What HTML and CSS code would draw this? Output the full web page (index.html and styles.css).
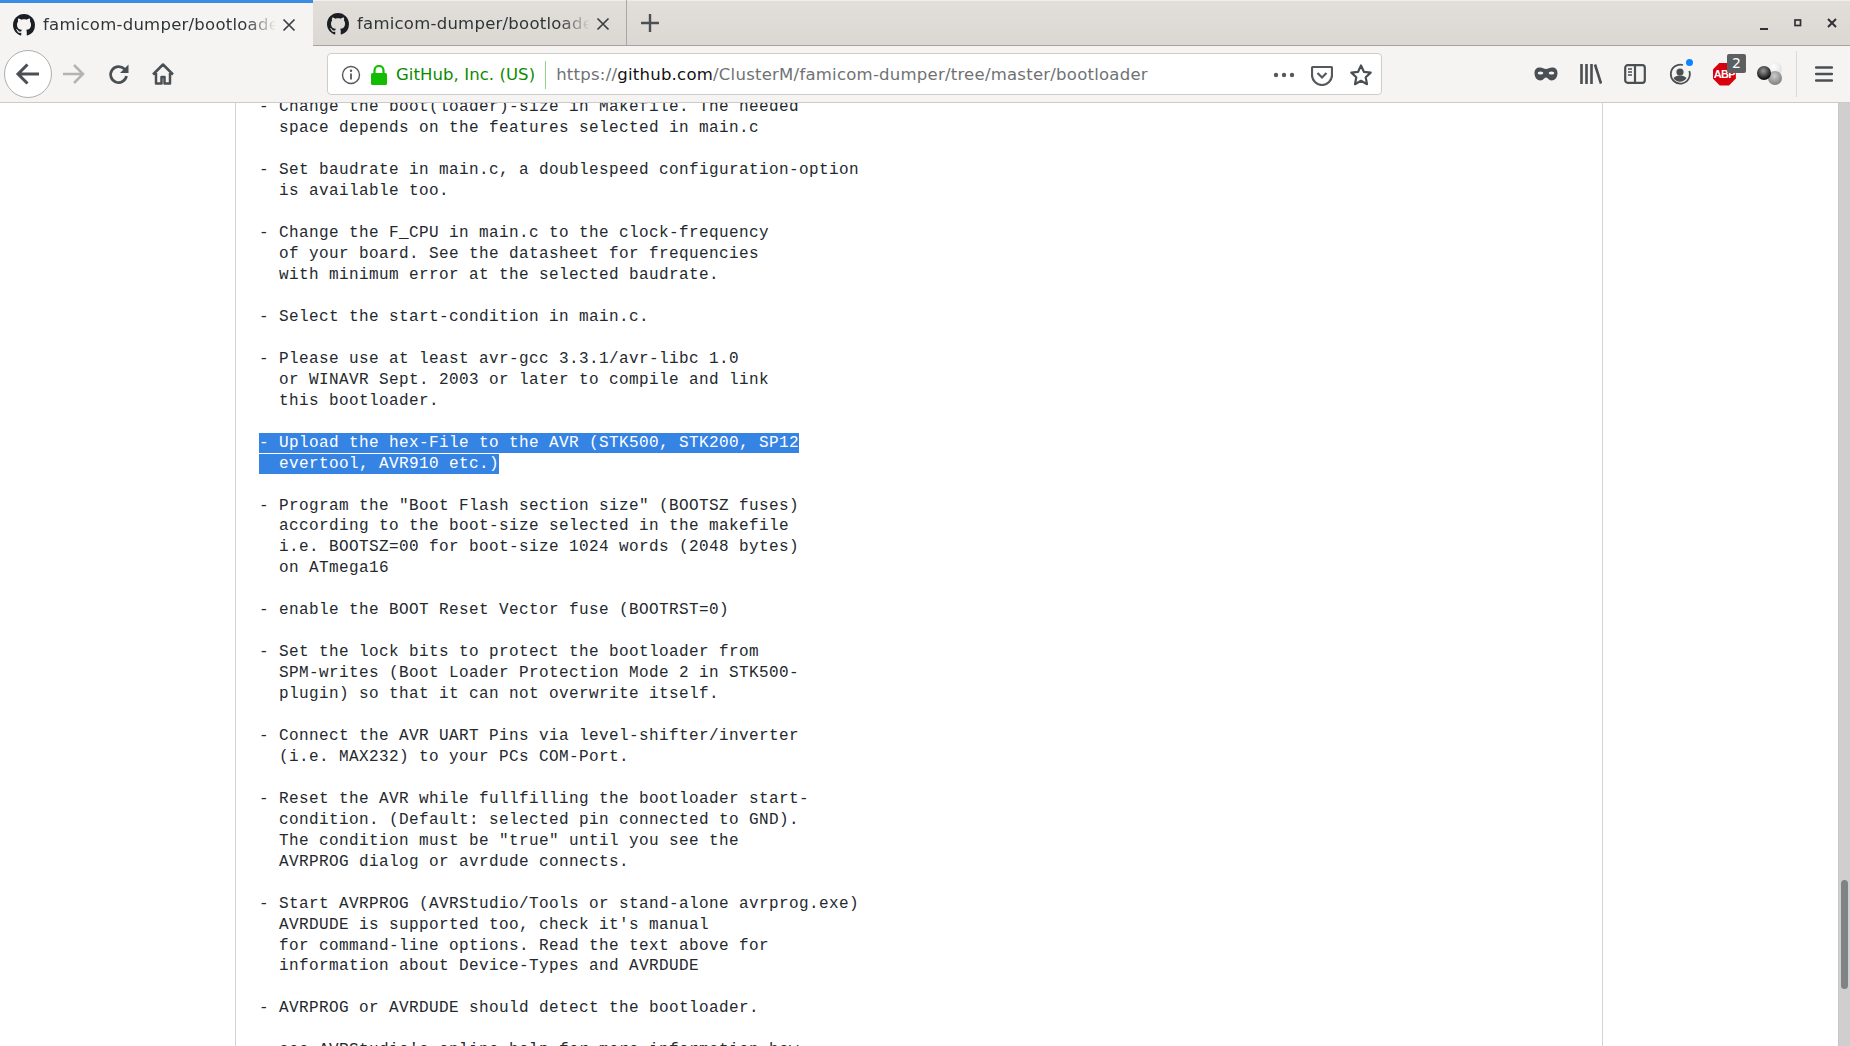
FILE: index.html
```html
<!DOCTYPE html>
<html lang="en">
<head>
<meta charset="utf-8">
<title>famicom-dumper/bootloader</title>
<link rel="stylesheet" href="styles.css">
</head>
<body>
<svg class="defs" width="0" height="0" aria-hidden="true">
  <symbol id="gh" viewBox="0 0 16 16"><path d="M8 0C3.58 0 0 3.58 0 8c0 3.54 2.29 6.53 5.47 7.59.4.07.55-.17.55-.38 0-.19-.01-.82-.01-1.49-2.01.37-2.53-.49-2.69-.94-.09-.23-.48-.94-.82-1.13-.28-.15-.68-.52-.01-.53.63-.01 1.08.58 1.23.82.72 1.21 1.87.87 2.33.66.07-.52.28-.87.51-1.07-1.78-.2-3.64-.89-3.64-3.95 0-.87.31-1.59.82-2.15-.08-.2-.36-1.02.08-2.12 0 0 .67-.21 2.2.82.64-.18 1.32-.27 2-.27.68 0 1.36.09 2 .27 1.53-1.04 2.2-.82 2.2-.82.44 1.1.16 1.92.08 2.12.51.56.82 1.27.82 2.15 0 3.07-1.87 3.75-3.65 3.95.29.25.54.73.54 1.48 0 1.07-.01 1.93-.01 2.2 0 .21.15.46.55.38A8.013 8.013 0 0016 8c0-4.42-3.58-8-8-8z"/></symbol>
  <symbol id="x" viewBox="0 0 16 16"><path d="M2.5 2.5l11 11M13.5 2.5l-11 11" fill="none" stroke="currentColor" stroke-width="1.7"/></symbol>
</svg>
<header class="chrome">
  <div class="tabbar">
    <div class="tab tab-active">
      <svg class="tab-icon"><use href="#gh"/></svg>
      <span class="tab-title">famicom-dumper/bootloader</span>
      <svg class="tab-close"><use href="#x"/></svg>
    </div>
    <div class="tab">
      <svg class="tab-icon"><use href="#gh"/></svg>
      <span class="tab-title">famicom-dumper/bootloader</span>
      <svg class="tab-close"><use href="#x"/></svg>
    </div>
    <div class="newtab">
      <svg width="20" height="20" viewBox="0 0 20 20"><path d="M10 1v18M1 10h18" stroke="#4a4f53" stroke-width="2.4" fill="none"/></svg>
    </div>
    <div class="winctl">
      <svg width="14" height="14" viewBox="0 0 14 14" class="win-min"><rect x="3" y="10" width="8" height="2" fill="#2f3235"/></svg>
      <svg width="14" height="14" viewBox="0 0 14 14"><rect x="4" y="4" width="5.5" height="5.5" fill="none" stroke="#2f3235" stroke-width="1.7"/></svg>
      <svg width="14" height="14" viewBox="0 0 14 14"><path d="M3 3l8 8M11 3l-8 8" stroke="#2f3235" stroke-width="2" fill="none"/></svg>
    </div>
  </div>
  <div class="toolbar">
    <div class="backbtn">
      <svg width="26" height="24" viewBox="0 0 26 24"><path d="M24 12H3M12.5 2.5L3 12l9.500 9.500" fill="none" stroke="#4a4f53" stroke-width="3"/></svg>
    </div>
    <div class="navbtn fwd">
      <svg width="24" height="22" viewBox="0 0 24 22"><path d="M1 11h20M12 2l9 9-9 9" fill="none" stroke="#b3b3b3" stroke-width="2.500"/></svg>
    </div>
    <div class="navbtn">
      <svg width="22" height="22" viewBox="0 0 22 22"><path d="M18.500 13a8 8 0 1 1-2.300-7.200L19 8" fill="none" stroke="#4a4f53" stroke-width="2.700"/><path d="M20.500 1.500V10H12z" fill="#4a4f53"/></svg>
    </div>
    <div class="navbtn">
      <svg width="24" height="24" viewBox="0 0 24 24"><path d="M2 12.500L12 2.500l10 10M5 11v10.500h5.500V15h3v6.500H19V11" fill="none" stroke="#4a4f53" stroke-width="2.500" stroke-linejoin="round"/></svg>
    </div>
    <div class="urlbar">
      <svg class="url-info" width="20" height="20" viewBox="0 0 20 20"><circle cx="10" cy="10" r="8.500" fill="none" stroke="#55595c" stroke-width="1.400"/><path d="M10 8.500v6" stroke="#55595c" stroke-width="1.800"/><circle cx="10" cy="5.800" r="1.200" fill="#55595c"/></svg>
      <svg class="url-lock" width="18" height="20" viewBox="0 0 18 20"><rect x="1" y="8" width="16" height="12" rx="1.500" fill="#12bc00"/><path d="M4.500 8V5.500a4.500 4.500 0 0 1 9 0V8" fill="none" stroke="#12bc00" stroke-width="2.200"/></svg>
      <span class="url-org">GitHub, Inc. (US)</span>
      <span class="url-sep"></span>
      <span class="url-text">https://<b>github.com</b>/ClusterM/famicom-dumper/tree/master/bootloader</span>
      <span class="url-actions">
        <svg width="22" height="6" viewBox="0 0 22 6"><circle cx="3" cy="3" r="2.200" fill="#55595c"/><circle cx="11" cy="3" r="2.200" fill="#55595c"/><circle cx="19" cy="3" r="2.200" fill="#55595c"/></svg>
        <svg width="22" height="22" viewBox="0 0 22 22"><path d="M2 3h18a1 1 0 0 1 1 1v7a10 10 0 0 1-20 0V4a1 1 0 0 1 1-1z" fill="none" stroke="#55595c" stroke-width="2.200"/><path d="M6.500 9l4.500 4.500L15.500 9" fill="none" stroke="#55595c" stroke-width="2.200"/></svg>
        <svg width="24" height="24" viewBox="0 0 24 24"><path d="M12 2.500l2.900 6.300 6.800.8-5 4.700 1.300 6.900-6-3.400-6 3.400 1.300-6.900-5-4.700 6.800-.8z" fill="none" stroke="#4a4f53" stroke-width="2.200" stroke-linejoin="round"/></svg>
      </span>
    </div>
    <div class="tools">
      <span class="tool"><svg width="24" height="14" viewBox="0 0 24 14"><path d="M6 .5c2.500 0 4 1.500 6 1.500s3.500-1.500 6-1.500c3.500 0 5.500 2 5.500 5.500 0 4.500-2.500 7.500-6 7.500-3 0-3.500-3-5.500-3s-2.500 3-5.500 3c-3.500 0-6-3-6-7.500C.5 2.500 2.500.5 6 .5z" fill="#4a4f53"/><ellipse cx="6.500" cy="6" rx="2.800" ry="1.600" fill="#f5f4f3"/><ellipse cx="17.500" cy="6" rx="2.800" ry="1.600" fill="#f5f4f3"/></svg></span>
      <span class="tool"><svg width="22" height="20" viewBox="0 0 22 20"><path d="M1.500 0v20M6.500 0v20M11.500 0v20" stroke="#4a4f53" stroke-width="2.600"/><path d="M15 .5l6 19" stroke="#4a4f53" stroke-width="2.600"/></svg></span>
      <span class="tool"><svg width="22" height="20" viewBox="0 0 22 20"><rect x="1.200" y="1.200" width="19.600" height="17.600" rx="2.500" fill="none" stroke="#4a4f53" stroke-width="2.200"/><path d="M11 1v18" stroke="#4a4f53" stroke-width="2.200"/><path d="M4 5h4M4 8h4M4 11h4" stroke="#4a4f53" stroke-width="1.500"/></svg></span>
      <span class="tool tool-account"><svg width="22" height="22" viewBox="0 0 22 22"><path d="M14 2a9.500 9.500 0 1 0 6.300 6" fill="none" stroke="#4a4f53" stroke-width="1.800"/><circle cx="11" cy="9" r="3.600" fill="#4a4f53"/><path d="M4.500 15c2-2 4.500-2.400 6.500-2.400s4.500.4 6.500 2.400c-1.500 2.500-4 3.800-6.500 3.800s-5-1.300-6.500-3.800z" fill="#4a4f53"/></svg><i class="dot"></i></span>
      <span class="tool tool-abp"><span class="abp">ABP</span><span class="abp-badge">2</span></span>
      <span class="tool tool-balls"><i class="ball ball-w"></i><i class="ball ball-g"></i><i class="ball ball-k"></i></span>
    </div>
    <span class="tool-sep"></span>
    <div class="menu"><svg width="18" height="18" viewBox="0 0 18 18"><path d="M1 2.500h16M1 9h16M1 15.500h16" stroke="#4a4f53" stroke-width="2.400" stroke-linecap="round"/></svg></div>
  </div>
</header>
<main class="viewport">
  <div class="gutter"></div>
  <article class="sheet">
<pre class="code">- Change the boot(loader)-size in Makefile. The needed
  space depends on the features selected in main.c

- Set baudrate in main.c, a doublespeed configuration-option
  is available too.

- Change the F_CPU in main.c to the clock-frequency
  of your board. See the datasheet for frequencies
  with minimum error at the selected baudrate.

- Select the start-condition in main.c.

- Please use at least avr-gcc 3.3.1/avr-libc 1.0
  or WINAVR Sept. 2003 or later to compile and link
  this bootloader.

<span class="sel">- Upload the hex-File to the AVR (STK500, STK200, SP12</span>
<span class="sel">  evertool, AVR910 etc.)</span>

- Program the "Boot Flash section size" (BOOTSZ fuses)
  according to the boot-size selected in the makefile
  i.e. BOOTSZ=00 for boot-size 1024 words (2048 bytes)
  on ATmega16

- enable the BOOT Reset Vector fuse (BOOTRST=0)

- Set the lock bits to protect the bootloader from
  SPM-writes (Boot Loader Protection Mode 2 in STK500-
  plugin) so that it can not overwrite itself.

- Connect the AVR UART Pins via level-shifter/inverter
  (i.e. MAX232) to your PCs COM-Port.

- Reset the AVR while fullfilling the bootloader start-
  condition. (Default: selected pin connected to GND).
  The condition must be "true" until you see the
  AVRPROG dialog or avrdude connects.

- Start AVRPROG (AVRStudio/Tools or stand-alone avrprog.exe)
  AVRDUDE is supported too, check it's manual
  for command-line options. Read the text above for
  information about Device-Types and AVRDUDE

- AVRPROG or AVRDUDE should detect the bootloader.

  see AVRStudio's online help for more information how</pre>
  </article>
  <div class="gutter-right"></div>
  <div class="scrollbar"><div class="thumb"></div></div>
</main>
</body>
</html>
```
FILE: styles.css
```css
* { box-sizing: border-box; }
html, body { margin: 0; height: 100%; overflow: hidden; background: #fff; }
body { display: flex; flex-direction: column; height: 1046px; font-family: "DejaVu Sans", sans-serif; }
.defs { position: absolute; }
.chrome { flex: none; }

.tabbar { display: flex; height: 46px; background: linear-gradient(#e2dfdb, #dbd8d3); border-top: 1px solid #f0eeec; border-bottom: 1px solid #a3a3a0; color: #2f3437; }
.tab { width: 314px; height: 45px; margin-top: -1px; display: flex; align-items: center; padding: 2px 0 0 14px; border-right: 1px solid #a8a7a4; flex: none; }
.tab-active { width: 313px; padding: 0 0 0 13px; background: #f5f4f3; border-top: 3px solid #3a8ce4; border-right: 0; height: 46px; margin-bottom: -1px; position: relative; }
.tab-icon { width: 22px; height: 22px; flex: none; fill: #1b1f23; }
.tab-title { width: 233px; margin-left: 8px; font-size: 16.500px; letter-spacing: .24px; white-space: nowrap; overflow: hidden; flex: none; -webkit-mask-image: linear-gradient(to right, #000 87%, transparent 100%); mask-image: linear-gradient(to right, #000 87%, transparent 100%); }
.tab-close { width: 16px; height: 16px; margin-left: 5px; flex: none; color: #3c4043; }
.newtab { width: 46px; display: flex; align-items: center; justify-content: center; }
.winctl { margin-left: auto; display: flex; align-items: center; gap: 20px; padding-right: 11px; }
.win-min { position: relative; top: 2px; }

.toolbar { height: 57px; display: flex; align-items: center; background: #f5f4f3; border-bottom: 1px solid #cdcac6; padding-left: 4px; }
.backbtn { width: 48px; height: 48px; border-radius: 50%; border: 1px solid #aeaeae; background: #fff; display: flex; align-items: center; justify-content: center; flex: none; }
.navbtn { width: 44.500px; height: 44px; display: flex; align-items: center; justify-content: center; flex: none; }
.urlbar { width: 1055px; height: 42px; margin-left: 141.500px; display: flex; align-items: center; background: #fff; border: 1px solid #cfcdca; border-radius: 4px; flex: none; padding: 1px 0 0 13px; font-size: 16.500px; letter-spacing: .24px; }
.url-lock { margin-left: 9px; flex: none; }
.url-org { margin-left: 8px; color: #0b8a00; white-space: nowrap; letter-spacing: .07px; }
.url-sep { width: 1px; height: 28px; background: #8fd48a; margin-left: 10px; }
.url-text { margin-left: 10px; color: #6f7274; white-space: nowrap; }
.url-text b { font-weight: 400; color: #111; }
.url-actions { margin-left: auto; display: flex; align-items: center; gap: 16px; padding-right: 8px; }
.tools { display: flex; align-items: center; margin-left: 141.700px; }
.tool { width: 44.600px; height: 40px; display: flex; align-items: center; justify-content: center; position: relative; flex: none; }
.dot { position: absolute; width: 7px; height: 7px; border-radius: 50%; background: #0a84ff; right: 9px; top: 5px; }
.abp { width: 23px; height: 23px; background: #d8000c; clip-path: polygon(30% 0, 70% 0, 100% 30%, 100% 70%, 70% 100%, 30% 100%, 0 70%, 0 30%); color: #fff; font: 700 11px/23px "Liberation Sans", sans-serif; letter-spacing: -.6px; text-align: center; }
.abp-badge { position: absolute; left: 25px; top: 0; width: 19px; height: 19px; background: #5c5f61; border-radius: 2px; color: #fff; font-size: 14px; line-height: 19px; text-align: center; }
.ball { position: absolute; border-radius: 50%; width: 14px; height: 14px; }
.ball-w { left: 21px; top: 8px; background: radial-gradient(circle at 40% 35%, #fff, #d5d5d5); }
.ball-g { left: 21.500px; top: 17px; background: radial-gradient(circle at 45% 35%, #ccc, #666); }
.ball-k { left: 10px; top: 12px; background: radial-gradient(circle at 45% 35%, #999, #111 70%); }
.tool-sep { width: 1px; height: 46px; background: #dcdad7; margin-left: 5px; }
.menu { flex: 1; display: flex; align-items: center; justify-content: center; }

.viewport { flex: 1; min-height: 0; display: flex; overflow: hidden; background: #fff; }
.gutter { width: 235px; flex: none; }
.sheet { width: 1368px; flex: none; border-left: 1px solid #d1d5da; border-right: 1px solid #d1d5da; padding-left: 23px; overflow: hidden; }
.code { margin: -5.600px 0 0; font: 16px/20.950px "Liberation Mono", monospace; letter-spacing: .4px; color: #24292e; white-space: pre; }
.sel { display: inline-block; height: 20px; line-height: 20px; vertical-align: top; background: #3584e4; color: #fff; }
.gutter-right { flex: 1; }
.scrollbar { width: 12px; flex: none; background: #cfcfcf; border-left: 1px solid #c9c5c0; padding: 777px 2px 0 2px; }
.thumb { width: 7px; height: 109px; border-radius: 4px; background: #7f8383; }
```
